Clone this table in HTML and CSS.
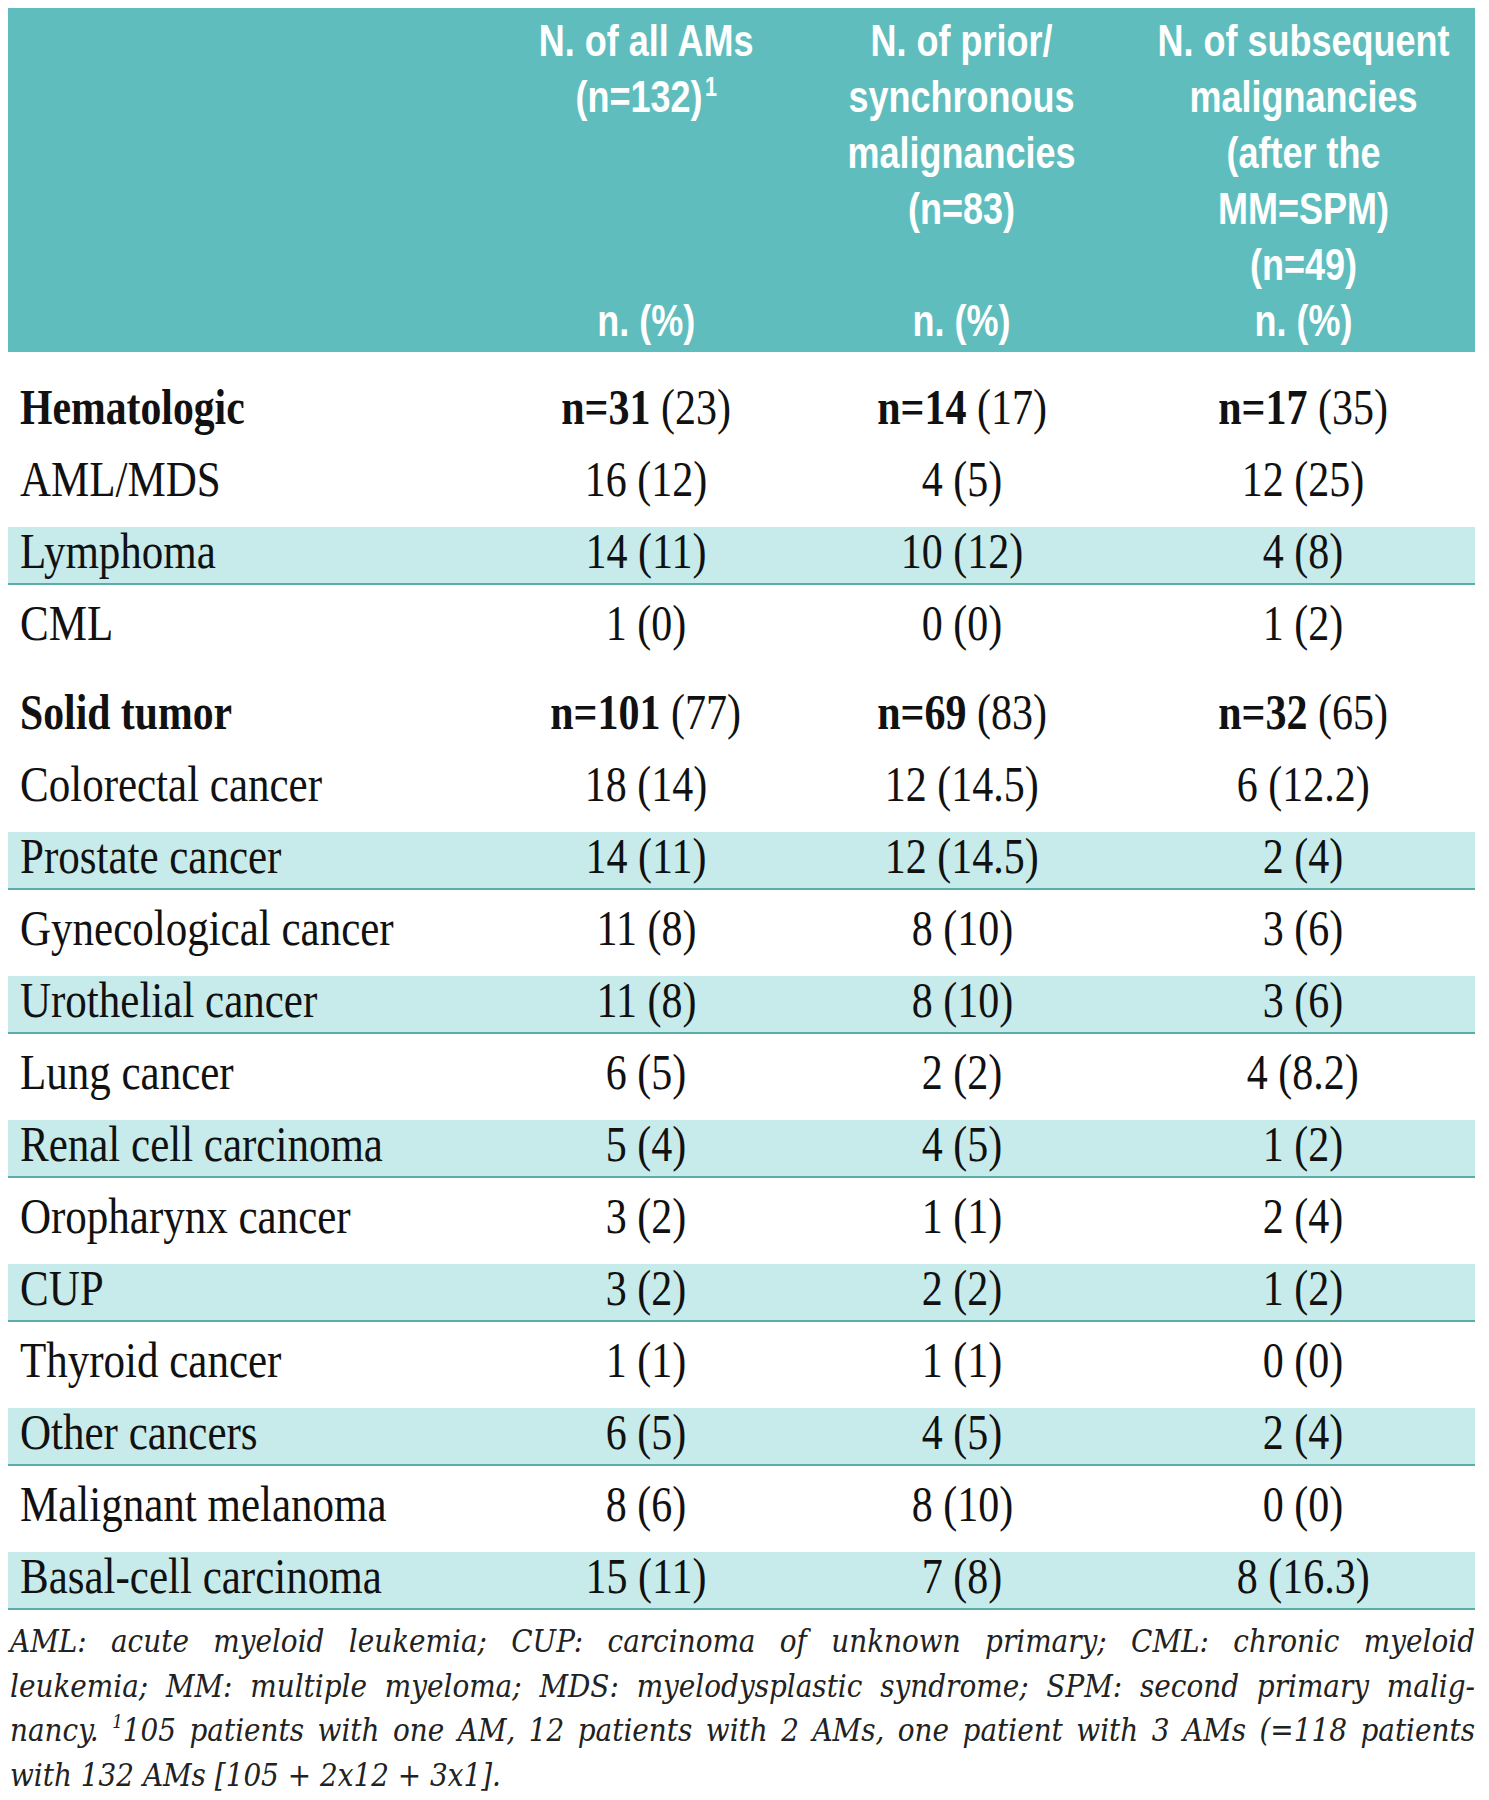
FILE: index.html
```html
<!DOCTYPE html>
<html lang="en">
<head>
<meta charset="utf-8">
<title>Additional malignancies</title>
<link rel="stylesheet" href="styles.css">
</head>
<body>
<div class="table">
  <div class="thead">
    <div class="hcell"></div>
    <div class="hcell"><div class="hin"><div class="htitle">N. of all AMs<br>(n=132)<sup>1</sup></div><div class="hunit">n. (%)</div></div></div>
    <div class="hcell"><div class="hin"><div class="htitle">N. of prior/<br>synchronous<br>malignancies<br>(n=83)</div><div class="hunit">n. (%)</div></div></div>
    <div class="hcell"><div class="hin"><div class="htitle">N. of subsequent<br>malignancies<br>(after the<br>MM=SPM)<br>(n=49)</div><div class="hunit">n. (%)</div></div></div>
  </div>

  <div class="row group"><div class="label"><span class="t"><b>Hematologic</b></span></div><div class="num"><span class="t"><b>n=31</b> (23)</span></div><div class="num"><span class="t"><b>n=14</b> (17)</span></div><div class="num"><span class="t"><b>n=17</b> (35)</span></div></div>
  <div class="row"><div class="label"><span class="t">AML/MDS</span></div><div class="num"><span class="t">16 (12)</span></div><div class="num"><span class="t">4 (5)</span></div><div class="num"><span class="t">12 (25)</span></div></div>
  <div class="row shaded"><div class="label"><span class="t">Lymphoma</span></div><div class="num"><span class="t">14 (11)</span></div><div class="num"><span class="t">10 (12)</span></div><div class="num"><span class="t">4 (8)</span></div></div>
  <div class="row"><div class="label"><span class="t">CML</span></div><div class="num"><span class="t">1 (0)</span></div><div class="num"><span class="t">0 (0)</span></div><div class="num"><span class="t">1 (2)</span></div></div>

  <div class="row group"><div class="label"><span class="t"><b>Solid tumor</b></span></div><div class="num"><span class="t"><b>n=101</b> (77)</span></div><div class="num"><span class="t"><b>n=69</b> (83)</span></div><div class="num"><span class="t"><b>n=32</b> (65)</span></div></div>
  <div class="row"><div class="label"><span class="t">Colorectal cancer</span></div><div class="num"><span class="t">18 (14)</span></div><div class="num"><span class="t">12 (14.5)</span></div><div class="num"><span class="t">6 (12.2)</span></div></div>
  <div class="row shaded"><div class="label"><span class="t">Prostate cancer</span></div><div class="num"><span class="t">14 (11)</span></div><div class="num"><span class="t">12 (14.5)</span></div><div class="num"><span class="t">2 (4)</span></div></div>
  <div class="row"><div class="label"><span class="t">Gynecological cancer</span></div><div class="num"><span class="t">11 (8)</span></div><div class="num"><span class="t">8 (10)</span></div><div class="num"><span class="t">3 (6)</span></div></div>
  <div class="row shaded"><div class="label"><span class="t">Urothelial cancer</span></div><div class="num"><span class="t">11 (8)</span></div><div class="num"><span class="t">8 (10)</span></div><div class="num"><span class="t">3 (6)</span></div></div>
  <div class="row"><div class="label"><span class="t">Lung cancer</span></div><div class="num"><span class="t">6 (5)</span></div><div class="num"><span class="t">2 (2)</span></div><div class="num"><span class="t">4 (8.2)</span></div></div>
  <div class="row shaded"><div class="label"><span class="t">Renal cell carcinoma</span></div><div class="num"><span class="t">5 (4)</span></div><div class="num"><span class="t">4 (5)</span></div><div class="num"><span class="t">1 (2)</span></div></div>
  <div class="row"><div class="label"><span class="t">Oropharynx cancer</span></div><div class="num"><span class="t">3 (2)</span></div><div class="num"><span class="t">1 (1)</span></div><div class="num"><span class="t">2 (4)</span></div></div>
  <div class="row shaded"><div class="label"><span class="t">CUP</span></div><div class="num"><span class="t">3 (2)</span></div><div class="num"><span class="t">2 (2)</span></div><div class="num"><span class="t">1 (2)</span></div></div>
  <div class="row"><div class="label"><span class="t">Thyroid cancer</span></div><div class="num"><span class="t">1 (1)</span></div><div class="num"><span class="t">1 (1)</span></div><div class="num"><span class="t">0 (0)</span></div></div>
  <div class="row shaded"><div class="label"><span class="t">Other cancers</span></div><div class="num"><span class="t">6 (5)</span></div><div class="num"><span class="t">4 (5)</span></div><div class="num"><span class="t">2 (4)</span></div></div>
  <div class="row"><div class="label"><span class="t">Malignant melanoma</span></div><div class="num"><span class="t">8 (6)</span></div><div class="num"><span class="t">8 (10)</span></div><div class="num"><span class="t">0 (0)</span></div></div>
  <div class="row shaded last"><div class="label"><span class="t">Basal-cell carcinoma</span></div><div class="num"><span class="t">15 (11)</span></div><div class="num"><span class="t">7 (8)</span></div><div class="num"><span class="t">8 (16.3)</span></div></div>
</div>

<div class="footnote">
  <div class="fline">AML: acute myeloid leukemia; CUP: carcinoma of unknown primary; CML: chronic myeloid</div>
  <div class="fline">leukemia; MM: multiple myeloma; MDS: myelodysplastic syndrome; SPM: second primary malig-</div>
  <div class="fline">nancy. <sup>1</sup>105 patients with one AM, 12 patients with 2 AMs, one patient with 3 AMs (=118 patients</div>
  <div class="fline final">with 132 AMs [105 + 2x12 + 3x1].</div>
</div>
</body>
</html>
```

FILE: styles.css
```css
html, body {
  margin: 0;
  padding: 0;
  background: #ffffff;
}

body {
  width: 1489px;
  color: #111111;
}

.table {
  margin-left: 8px;
  margin-top: 8px;
  width: 1467px;
}

.thead,
.row {
  display: grid;
  grid-template-columns: 491px 294px 338px 344px;
}

/* Header */
.thead {
  background: #5fbebd;
  padding: 5px 0 3px;
  height: 336px;
  color: #ffffff;
  font-family: "Liberation Sans", Arial, sans-serif;
  font-weight: 700;
  font-size: 45px;
  line-height: 56px;
}

.hcell {
  display: flex;
  justify-content: center;
  height: 336px;
}

.hin {
  width: max-content;
  height: 336px;
  display: flex;
  flex-direction: column;
  justify-content: space-between;
  text-align: center;
  white-space: nowrap;
  transform: scaleX(0.8);
  transform-origin: center center;
}

.hin sup {
  font-size: 0.6em;
  line-height: 0;
  vertical-align: 0.6em;
  margin-left: 3px;
}

/* Body rows */
.row {
  height: 49px;
  padding-bottom: 7px;
  border-bottom: 2px solid transparent;
  margin-top: 14px;
  font-family: "Liberation Serif", "Times New Roman", serif;
  font-size: 50px;
  line-height: 49px;
  color: #111111;
}

.row.group {
  margin-top: 31px;
}

.row.shaded {
  background: #c7ebea;
  border-bottom-color: #5aaea9;
}

.row > div {
  height: 49px;
  white-space: nowrap;
}

.label {
  padding-left: 12px;
}

.num {
  display: flex;
  justify-content: center;
}

.t {
  display: inline-block;
  transform: scaleX(0.84);
  transform-origin: center center;
}

.label .t {
  transform: scaleX(0.86);
  transform-origin: left center;
}

.label .t b {
  display: inline-block;
  transform: scaleX(0.97);
  transform-origin: left center;
}

.t b {
  font-weight: 700;
}

/* Footnote */
.footnote {
  margin-left: 10px;
  margin-top: 9px;
  width: 1465px;
  font-family: "DejaVu Serif", "Liberation Serif", serif;
  font-stretch: condensed;
  font-style: italic;
  font-size: 31px;
  line-height: 44.5px;
  color: #222222;
}

.fline {
  text-align: justify;
  text-align-last: justify;
  white-space: nowrap;
}

.fline.final {
  text-align: left;
  text-align-last: left;
}

.fline sup {
  font-size: 0.6em;
  line-height: 0;
  vertical-align: 0.7em;
}
```
